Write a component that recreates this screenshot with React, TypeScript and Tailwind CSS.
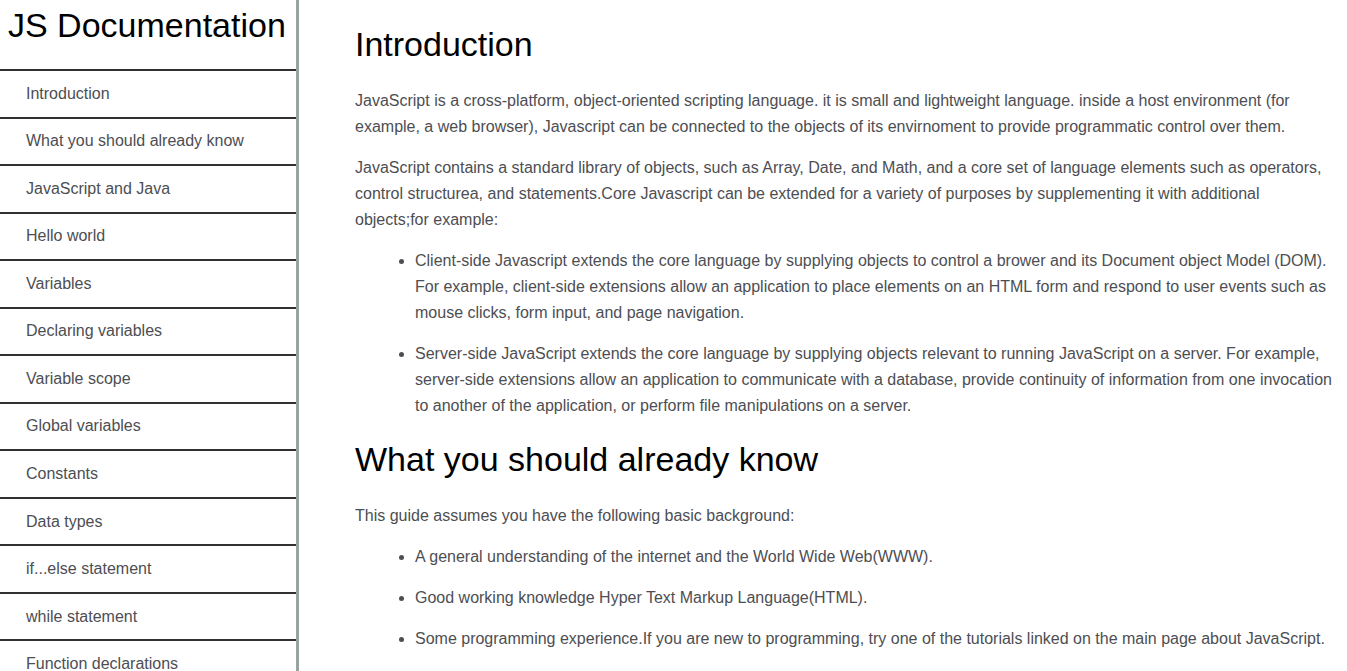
import React from "react";

const navItems = [
  "Introduction",
  "What you should already know",
  "JavaScript and Java",
  "Hello world",
  "Variables",
  "Declaring variables",
  "Variable scope",
  "Global variables",
  "Constants",
  "Data types",
  "if...else statement",
  "while statement",
  "Function declarations",
];

const slug = (title: string) => title.replace(/\s+/g, "_");

function Sidebar() {
  return (
    <nav className="flex w-[299px] shrink-0 flex-col overflow-hidden border-r-3 border-[#98a29f]">
      <h1 className="h-[69px] shrink-0 pt-1 pl-2 text-[34px] leading-[43px] whitespace-nowrap text-black">
        JS Documentation
      </h1>
      <ul className="-mb-4 flex flex-1 flex-col">
        {navItems.map((item) => (
          <li key={item} className="flex flex-1 border-t-2 border-[#313033]">
            <a href={`#${slug(item)}`} className="flex flex-1 items-center pl-[26px] leading-6">
              {item}
            </a>
          </li>
        ))}
      </ul>
    </nav>
  );
}

function Section({ title, children }: { title: string; children: React.ReactNode }) {
  return (
    <section id={slug(title)} className="flex flex-col gap-[15px]">
      <h2 className="mb-[9px] text-[34px] leading-10 text-black">{title}</h2>
      {children}
    </section>
  );
}

export default function App() {
  return (
    <div className="flex h-screen overflow-hidden bg-white font-['Liberation_Sans',Arial,sans-serif] text-base text-[#4d4e53]">
      <Sidebar />
      <main className="flex min-w-0 flex-1 flex-col gap-5 overflow-hidden pt-6 pr-3 pl-14 leading-[26px]">
        <Section title="Introduction">
          <p>
            JavaScript is a cross-platform, object-oriented scripting language. it is small and
            lightweight language. inside a host environment (for example, a web browser), Javascript
            can be connected to the objects of its envirnoment to provide programmatic control over
            them.
          </p>
          <p>
            JavaScript contains a standard library of objects, such as Array, Date, and Math, and a
            core set of language elements such as operators, control structurea, and statements.Core
            Javascript can be extended for a variety of purposes by supplementing it with additional
            objects;for example:
          </p>
          <ul className="flex list-disc flex-col gap-[15px] pl-[60px]">
            <li>
              Client-side Javascript extends the core language by supplying objects to control a
              brower and its Document object Model (DOM). For example, client-side extensions allow
              an application to place elements on an HTML form and respond to user events such as
              mouse clicks, form input, and page navigation.
            </li>
            <li>
              Server-side JavaScript extends the core language by supplying objects relevant to
              running JavaScript on a server. For example, server-side extensions allow an
              application to communicate with a database, provide continuity of information from one
              invocation to another of the application, or perform file manipulations on a server.
            </li>
          </ul>
        </Section>
        <Section title="What you should already know">
          <p>This guide assumes you have the following basic background:</p>
          <ul className="flex list-disc flex-col gap-[15px] pl-[60px]">
            <li>A general understanding of the internet and the World Wide Web(WWW).</li>
            <li>Good working knowledge Hyper Text Markup Language(HTML).</li>
            <li>
              Some programming experience.If you are new to programming, try one of the tutorials
              linked on the main page about JavaScript.
            </li>
          </ul>
        </Section>
      </main>
    </div>
  );
}
